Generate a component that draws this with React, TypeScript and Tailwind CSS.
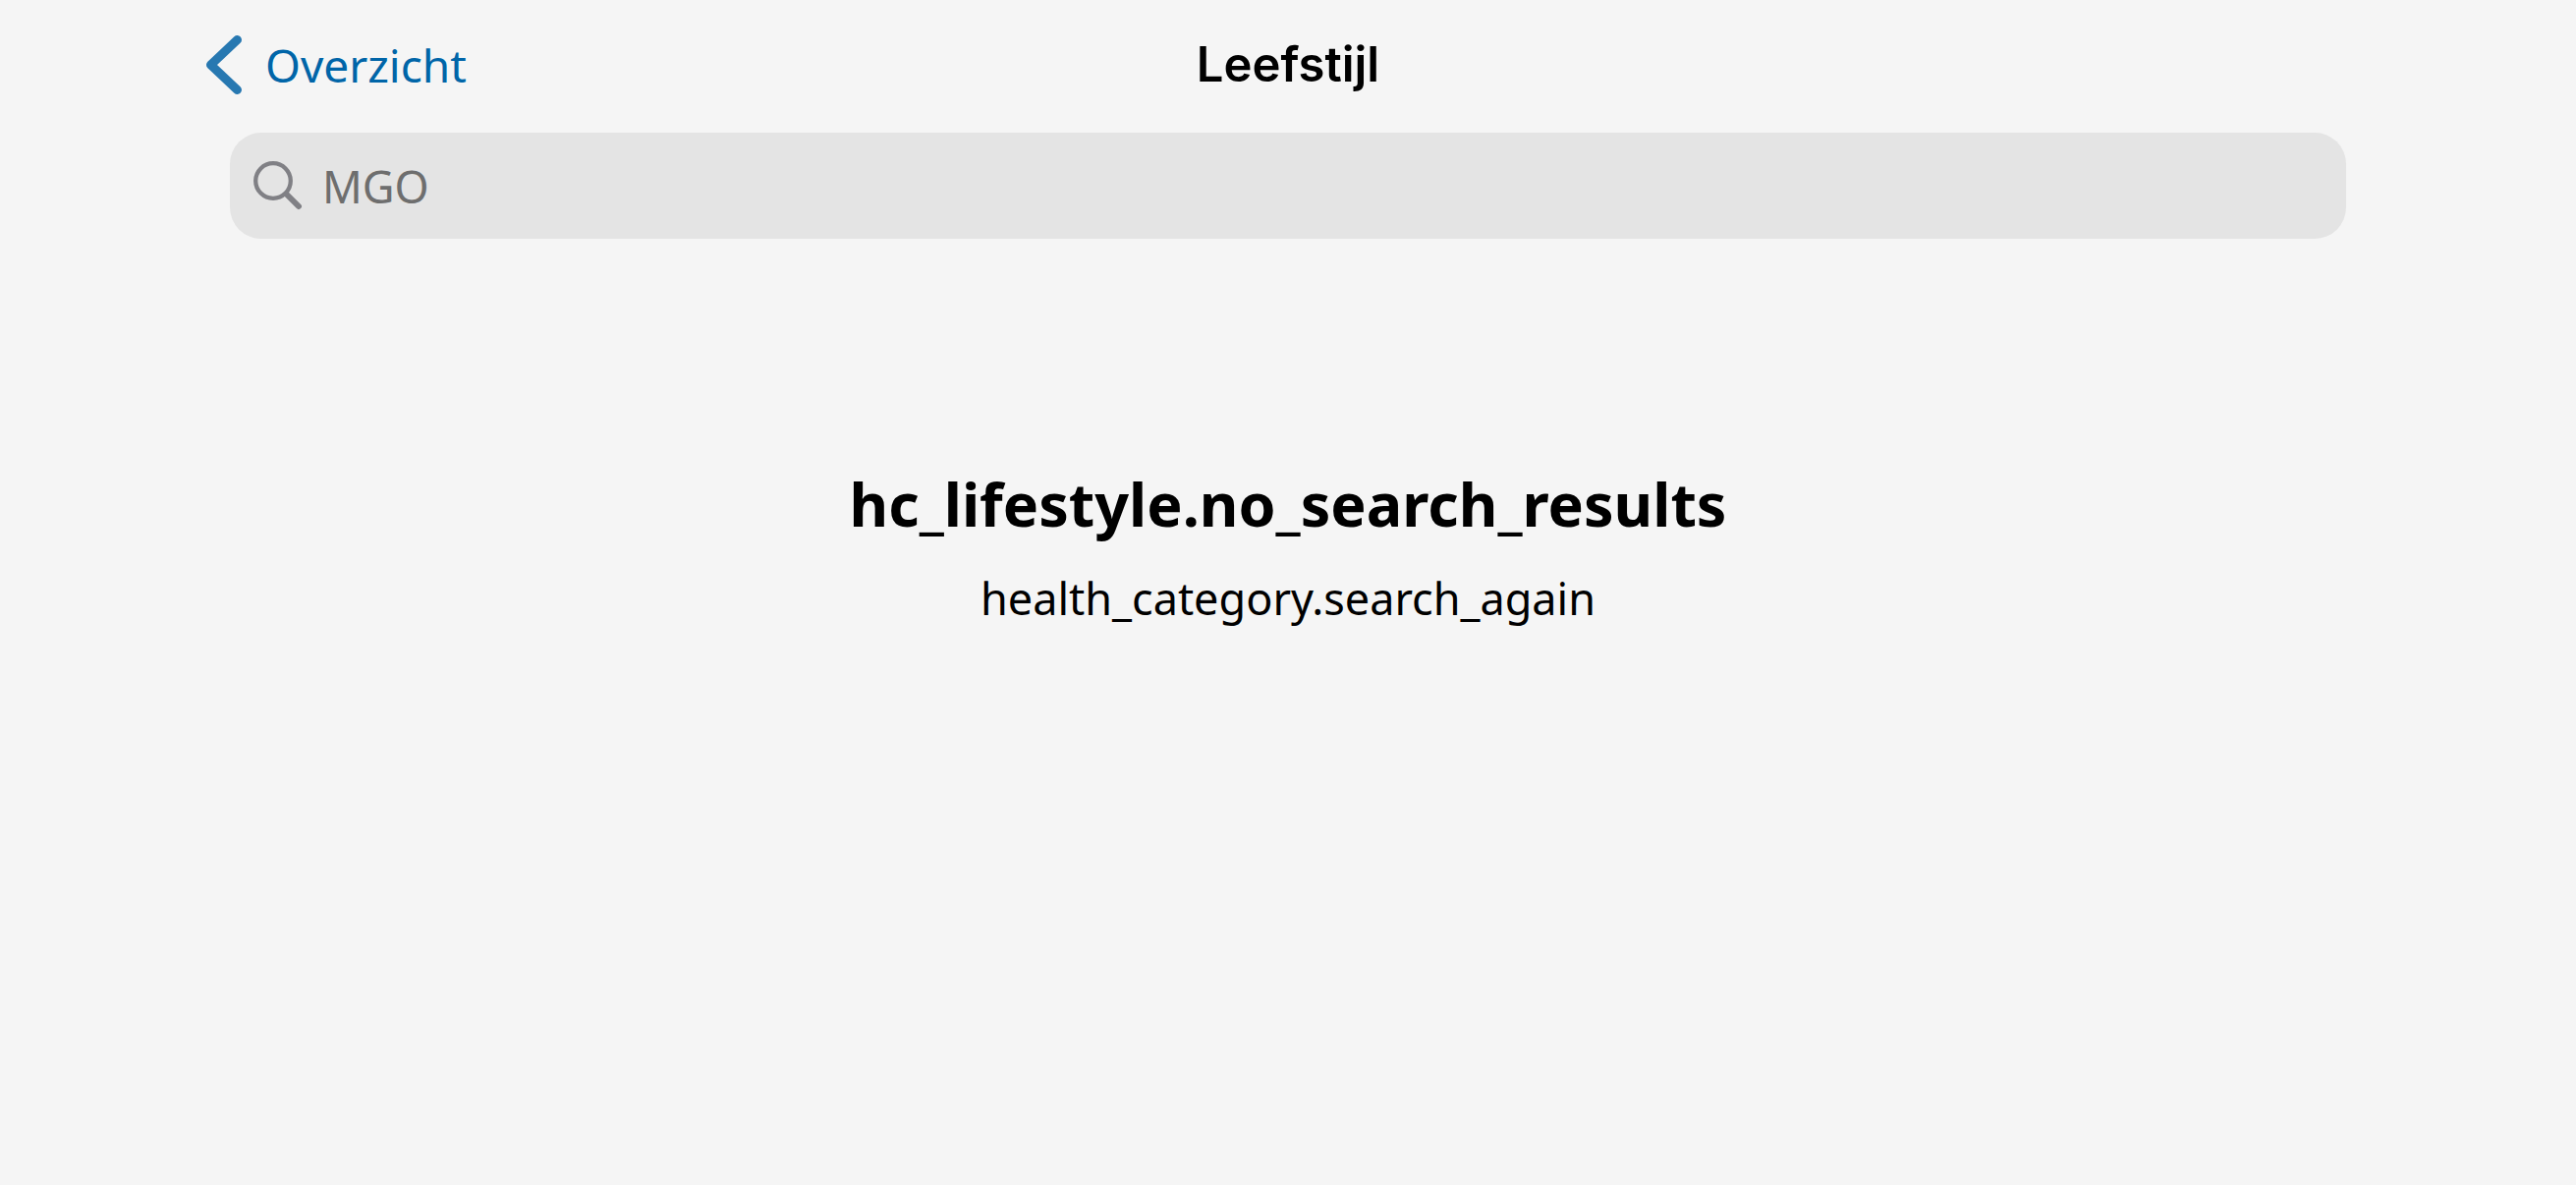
export default function App() {
  return (
    <div className="flex min-h-screen flex-col bg-[#f5f5f5] font-['Noto_Sans',sans-serif] text-black">
      <header className="grid h-[132px] grid-cols-3 items-center px-[208px]">
        <button type="button" className="flex items-center gap-6 justify-self-start text-[46px] leading-[60px] text-[#0065a8]">
          <svg viewBox="0 0 38 60" className="h-[60px] w-[38px]" fill="none" stroke="#2778b1" strokeWidth="9" strokeLinecap="round" strokeLinejoin="round" aria-hidden="true">
            <path d="M33.500 4.500 6.500 30 33.500 55.500" />
          </svg>
          <span>Overzicht</span>
        </button>
        <h1 className="justify-self-center font-['Inter',sans-serif] text-[49px] leading-[60px] font-semibold">Leefstijl</h1>
      </header>
      <search className="mx-[234px] mt-[3px] flex h-[108px] items-center gap-5 rounded-[32px] bg-[#e4e4e4] px-6">
        <svg viewBox="0 0 50 50" className="size-[50px]" fill="none" stroke="#808085" strokeLinecap="round" aria-hidden="true">
          <circle cx="20" cy="20" r="17.8" strokeWidth="4.300" />
          <path d="M33.500 33.500 46 46" strokeWidth="6" />
        </svg>
        <input type="text" aria-label="MGO" placeholder="MGO" className="h-[104px] min-w-0 flex-1 bg-transparent text-[45px] outline-none placeholder:text-[#6e6e6e]" />
      </search>
      <main className="mt-[228px] flex flex-col items-center">
        <h2 className="text-[61px] leading-[84px] font-bold">hc_lifestyle.no_search_results</h2>
        <p className="mt-5 text-[45px] leading-[68px]">health_category.search_again</p>
      </main>
    </div>
  );
}
